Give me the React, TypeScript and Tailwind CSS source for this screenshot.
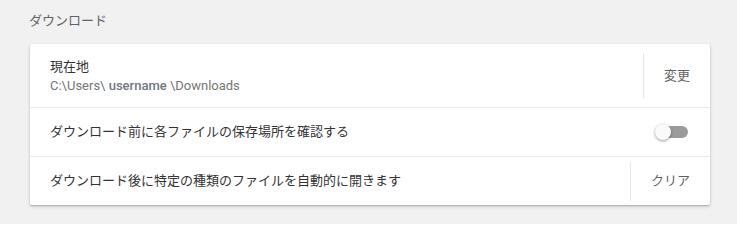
import React from "react";

export default function App() {
  const font = { fontFamily: 'Roboto, "Noto Sans CJK JP", sans-serif' };
  return (
    <div className="w-[737px] h-[224px] bg-[#f1f1f1] overflow-hidden" style={font}>
      <div className="pl-[29px] pt-[12px] h-[44px] text-[13px] leading-[18px] text-[#5f6368]">
        ダウンロード
      </div>
      <div className="ml-[30px] w-[680px] bg-white rounded-[2px] shadow-[0_1px_2px_rgba(0,0,0,0.25),0_2px_4px_rgba(0,0,0,0.08)]">
        <div className="h-[64px] flex items-center border-b border-[#ebebeb]">
          <div className="flex-1 pl-[20px] pt-[2px] flex flex-col">
            <div className="text-[13px] leading-[18px] text-[#333333]">現在地</div>
            <div className="text-[13px] leading-[20px] text-[#757575]">
              C:\Users\ <span className="font-medium text-[#6f7684]">username</span> \Downloads
            </div>
          </div>
          <div className="w-px h-[45px] bg-[#e6e6e6]" />
          <div className="px-[20px] text-[13px] text-[#5f6368]">変更</div>
        </div>
        <div className="h-[49px] flex items-center border-b border-[#ebebeb]">
          <div className="flex-1 pl-[20px] text-[13px] text-[#333333]">
            ダウンロード前に各ファイルの保存場所を確認する
          </div>
          <div className="relative w-[34px] h-[16px] mr-[22px] flex items-center">
            <div className="ml-[3px] w-[31px] h-[12px] rounded-full bg-[#9b9b9b]" />
            <div className="absolute left-[1px] top-0 w-[16px] h-[16px] rounded-full bg-[#fafafa] shadow-[0_1px_3px_rgba(0,0,0,0.4)]" />
          </div>
        </div>
        <div className="h-[48px] flex items-center">
          <div className="flex-1 pl-[20px] text-[13px] text-[#333333]">
            ダウンロード後に特定の種類のファイルを自動的に開きます
          </div>
          <div className="w-px h-[39px] bg-[#e6e6e6]" />
          <div className="px-[20px] text-[13px] text-[#5f6368]">クリア</div>
        </div>
      </div>
    </div>
  );
}
